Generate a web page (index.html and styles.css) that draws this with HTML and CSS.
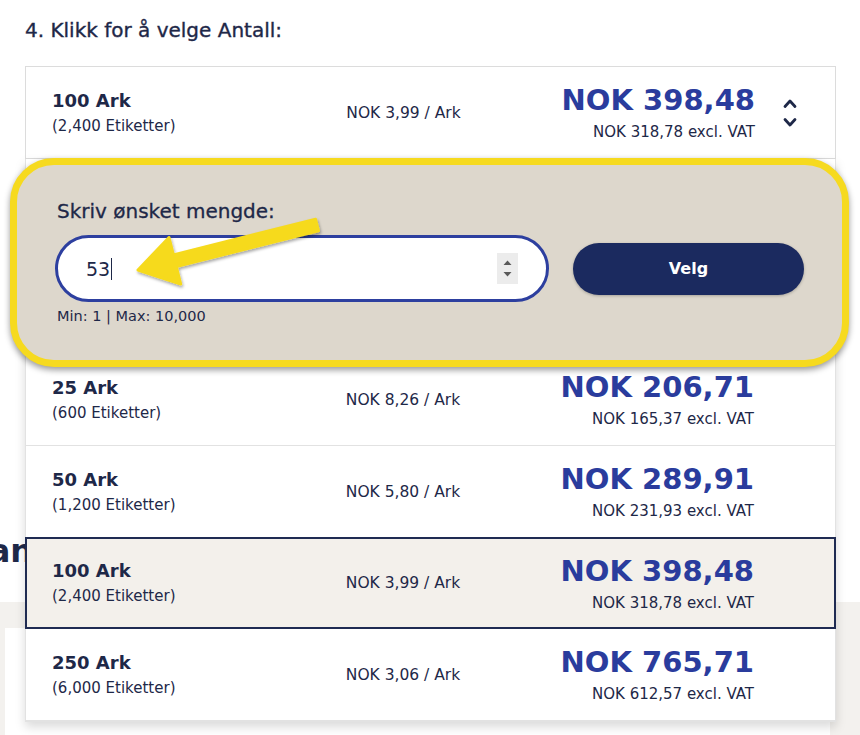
FILE: index.html
```html
<!DOCTYPE html>
<html lang="no">
<head>
    <meta charset="UTF-8">
    <meta name="viewport" content="width=device-width, initial-scale=1.0">
    <title>Velg antall</title>
    <link rel="stylesheet" href="styles.css">
</head>
<body>
    <div class="page">
        <h3 class="step-title">4. Klikk for å velge Antall:</h3>

        <div class="qty-picker">
            <div class="qty-select">
                <div class="opt-name"><strong>100 Ark</strong><span>(2,400 Etiketter)</span></div>
                <div class="opt-unit">NOK 3,99 / Ark</div>
                <div class="opt-price"><strong>NOK 398,48</strong><span>NOK 318,78 excl. VAT</span></div>
                <svg class="chevrons" width="14" height="28" viewBox="0 0 14 28">
                    <path d="M2 7.5 L7 2 L12 7.5 M2 20.5 L7 26 L12 20.5" fill="none" stroke="#1e2848" stroke-width="2.8" stroke-linecap="round" stroke-linejoin="round"/>
                </svg>
            </div>

            <div class="qty-list">
                <div class="custom-qty">
                    <label class="custom-label">Skriv ønsket mengde:</label>
                    <div class="custom-row">
                        <div class="qty-input">
                            <span class="qty-value">53</span><i class="caret"></i>
                            <span class="spin">
                                <svg width="21" height="31" viewBox="0 0 21 31">
                                    <path d="M6.5 12 L10.5 7.5 L14.5 12 Z M6.5 19 L10.5 23.5 L14.5 19 Z" fill="#5a5a5a"/>
                                </svg>
                            </span>
                        </div>
                        <button class="btn-velg">Velg</button>
                    </div>
                    <p class="qty-limits">Min: 1 | Max: 10,000</p>
                    <!-- annotation arrow pointing at the field -->
                    <svg class="hint-arrow" width="320" height="140" viewBox="0 0 320 140">
                        <defs>
                            <filter id="arrowShadow" x="-10%" y="-30%" width="130%" height="170%">
                                <feDropShadow dx="1" dy="2" stdDeviation="1.8" flood-color="#000" flood-opacity="0.35"/>
                            </filter>
                        </defs>
                        <polygon points="121,105 163.7,119 159.3,101.6 301.5,65.8 298.5,54.2 156.4,89.9 152,72.5" fill="#f6da1f" stroke="#f6da1f" stroke-width="3" stroke-linejoin="round" filter="url(#arrowShadow)"/>
                    </svg>
                </div>

                <div class="qty-option">
                    <div class="opt-name"><strong>25 Ark</strong><span>(600 Etiketter)</span></div>
                    <div class="opt-unit">NOK 8,26 / Ark</div>
                    <div class="opt-price"><strong>NOK 206,71</strong><span>NOK 165,37 excl. VAT</span></div>
                </div>
                <div class="qty-option">
                    <div class="opt-name"><strong>50 Ark</strong><span>(1,200 Etiketter)</span></div>
                    <div class="opt-unit">NOK 5,80 / Ark</div>
                    <div class="opt-price"><strong>NOK 289,91</strong><span>NOK 231,93 excl. VAT</span></div>
                </div>
                <div class="qty-option selected">
                    <div class="opt-name"><strong>100 Ark</strong><span>(2,400 Etiketter)</span></div>
                    <div class="opt-unit">NOK 3,99 / Ark</div>
                    <div class="opt-price"><strong>NOK 398,48</strong><span>NOK 318,78 excl. VAT</span></div>
                </div>
                <div class="qty-option">
                    <div class="opt-name"><strong>250 Ark</strong><span>(6,000 Etiketter)</span></div>
                    <div class="opt-unit">NOK 3,06 / Ark</div>
                    <div class="opt-price"><strong>NOK 765,71</strong><span>NOK 612,57 excl. VAT</span></div>
                </div>
            </div>
        </div>
    </div>

    <div class="promo-title"><h2>Velg din plan</h2></div>
    <section class="promo">
        <div class="promo-card"></div>
    </section>
</body>
</html>
```

FILE: styles.css
```css
body {
    margin: 0;
    font-family: "DejaVu Sans", "Liberation Sans", sans-serif;
    color: #1e2848;
    background: #fff;
    overflow: hidden;
}
.page {
    padding: 18px 24px 0 25px;
}
.step-title {
    margin: 0 0 24px;
    font-size: 20px;
    line-height: 24px;
    font-weight: normal;
    -webkit-text-stroke: 0.35px #1e2848;
}
.qty-picker {
    position: relative;
    z-index: 5;
}
.qty-select,
.qty-option {
    display: grid;
    grid-template-columns: 1fr auto 1fr;
    align-items: center;
    box-sizing: border-box;
    height: 92px;
    padding: 0 81px 0 26px;
}
.qty-select {
    height: 93px;
    border: 1px solid #dcdcdc;
    padding-right: 38px;
    grid-template-columns: 1fr auto 1fr 42px;
    background: #fff;
}
.chevrons {
    justify-self: end;
}
.opt-name strong {
    display: block;
    font-size: 18px;
    line-height: 24px;
}
.opt-name span {
    display: block;
    font-size: 15px;
    line-height: 22px;
    margin-top: 2px;
}
.opt-unit {
    font-size: 15.5px;
}
.opt-price {
    text-align: right;
}
.opt-price strong {
    display: block;
    font-size: 29px;
    line-height: 34px;
    color: #2a3c9d;
}
.opt-price span {
    display: block;
    font-size: 15px;
    line-height: 20px;
    margin-top: 5px;
}
.qty-list {
    position: absolute;
    top: 100%;
    left: 0;
    right: 0;
    background: #fff;
    border: 1px solid #e2e2e2;
    border-top: 0;
    box-shadow: 0 5px 10px rgba(0, 0, 0, 0.15);
}
.qty-option {
    border-bottom: 1px solid #e2e2e2;
}
.qty-option.selected {
    background: #f3f0eb;
    border: 2px solid #1f2b52;
    margin: -1px -1px 0;
    padding: 0 80px 0 25px;
}

/* custom quantity box, highlighted */
.custom-qty {
    position: relative;
    z-index: 2;
    margin: -1px -14px -13px -16px;
    padding: 34px 38px 35px;
    background: #ddd7cc;
    border: 7px solid #f6da1f;
    border-radius: 44px;
    box-shadow: 0 3px 6px rgba(0, 0, 0, 0.4);
}
.custom-label {
    display: block;
    padding-left: 2px;
    font-size: 20px;
    line-height: 24px;
    margin-bottom: 12px;
    -webkit-text-stroke: 0.3px #1e2848;
}
.custom-row {
    display: flex;
    align-items: center;
    gap: 24px;
}
.qty-input {
    flex: 1;
    display: flex;
    align-items: center;
    box-sizing: border-box;
    height: 67px;
    padding: 0 28px;
    background: #fff;
    border: 3px solid #2d3f9f;
    border-radius: 34px;
    font-size: 19px;
}
.caret {
    width: 1px;
    height: 22px;
    background: #1e2848;
    margin-left: 1px;
}
.spin {
    margin-left: auto;
    display: flex;
    background: #ececec;
}
.btn-velg {
    width: 231px;
    height: 52px;
    border: 0;
    border-radius: 26px;
    background: #1b2a5f;
    color: #fff;
    font-family: inherit;
    font-size: 16px;
    font-weight: bold;
    box-shadow: 0 1px 3px rgba(0, 0, 0, 0.25);
}
.qty-limits {
    margin: 5px 0 0;
    padding-left: 2px;
    font-size: 14.5px;
    line-height: 18px;
}
.hint-arrow {
    position: absolute;
    left: 0;
    top: 0;
    overflow: visible;
    pointer-events: none;
}

/* page content behind the open dropdown */
.promo-title {
    display: flex;
    justify-content: flex-end;
    width: 33px;
    overflow: hidden;
    white-space: nowrap;
    margin-top: 370px;
}
.promo-title h2 {
    margin: 0;
    font-size: 32px;
    line-height: 44px;
}
.promo {
    margin-top: 29px;
    padding: 26px 30px 0 5px;
    background: #f3f1ee;
}
.promo-card {
    height: 200px;
    background: #fff;
}
```
